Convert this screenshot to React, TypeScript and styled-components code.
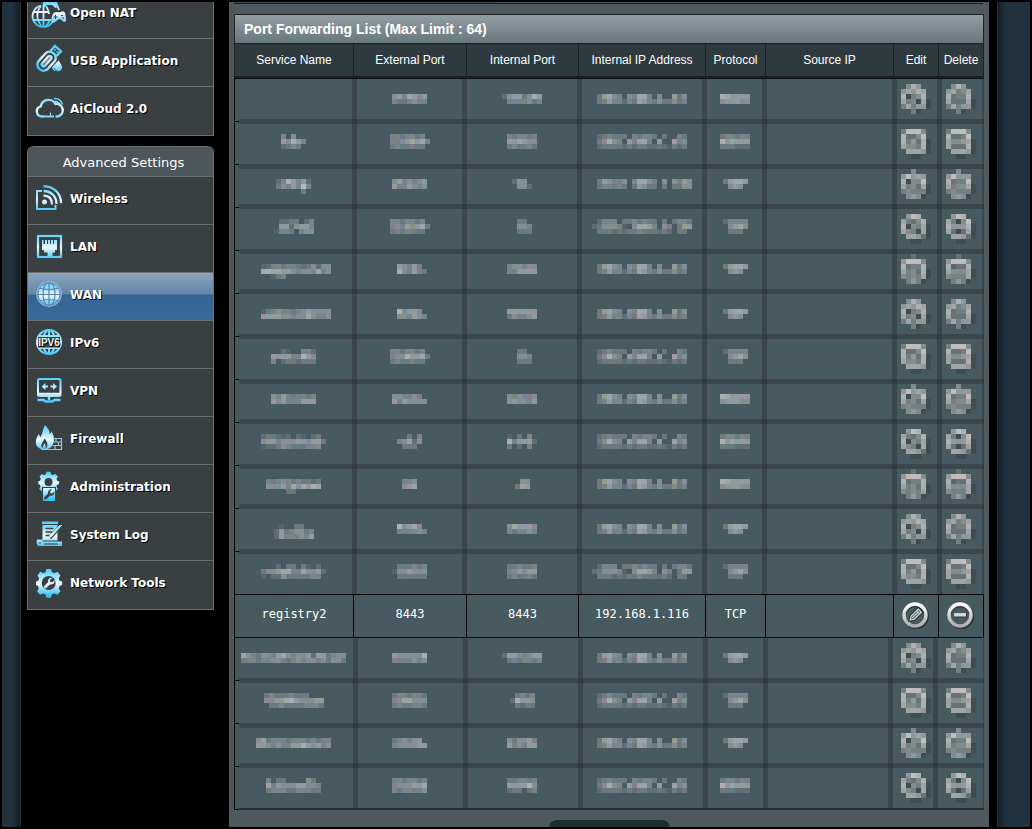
import React from 'react';
import styled, { createGlobalStyle } from 'styled-components';

const GlobalStyle = createGlobalStyle`
  * { box-sizing: border-box; }
  body { margin: 0; background: #000; }
`;

const sans = '"Liberation Sans", Arial, sans-serif';
const menuFont = '"DejaVu Sans", Verdana, sans-serif';
const mono = '"DejaVu Sans Mono", monospace';

const Frame = styled.div`
  display: flex;
  height: 100vh;
  overflow: hidden;
  border: 2px solid #000;
  background: #000;
`;

const Edge = styled.div<{ $side: 'left' | 'right' }>`
  flex: none;
  width: ${(p) => (p.$side === 'left' ? 19 : 33)}px;
  background: linear-gradient(to ${(p) => (p.$side === 'left' ? 'left' : 'right')}, #141f27 0, #21323e 8px);
  border-${(p) => (p.$side === 'left' ? 'right' : 'left')}: 1px solid #2b2b2b;
`;

const Content = styled.div`
  flex: 1;
  min-width: 0;
  display: flex;
  align-items: flex-start;
  gap: 15px;
  padding: 0 8px 0 6px;
`;

const Sidebar = styled.nav`
  flex: none;
  width: 187px;
  margin-top: -11px;
  display: flex;
  flex-direction: column;
  gap: 10px;
`;

const MenuGroup = styled.section`
  border: 1px solid #6b7071;
  border-top-width: 0;
  border-radius: 6px 6px 0 0;
`;

const MenuTitle = styled.h2`
  margin: 0;
  padding: 2px 0 0 6px;
  border: solid #6b7071;
  border-width: 1px 0;
  border-radius: 6px 6px 0 0;
  background: #4d565a;
  color: #fff;
  font: 400 13px/27px ${menuFont};
  text-align: center;
`;

const MenuList = styled.ul`
  list-style: none;
  margin: 0;
  padding: 0;
`;

const MenuLink = styled.a<{ $active?: boolean; $last?: boolean }>`
  display: flex;
  align-items: flex-start;
  gap: 7px;
  padding: 7px 7px 10px;
  border-bottom: 1px solid ${(p) => (p.$last ? '#3a3f42' : '#6b7071')};
  background: ${(p) => (p.$active
    ? 'linear-gradient(#8ba5bd, #6285a8 21px, #386493 22px, #376a9b)'
    : '#3a3f42')};
  color: #fff;
  font: 700 12px/30px ${menuFont};
  text-decoration: none;
  text-shadow: 1px 1px 0 #000;
  white-space: nowrap;
`;

const IconSvg = styled.svg`
  flex: none;
  width: 28px;
  height: 28px;
  overflow: visible;
`;

const HiddenDefs = styled.svg`
  position: absolute;
  width: 0;
  height: 0;
`;

const Main = styled.main`
  flex: 1;
  min-width: 0;
  padding: 0 5px;
  background: #4d595e;
`;

const PriorRow = styled.div`
  display: grid;
  grid-template-columns: 35% 65%;
  height: 2px;
  margin-right: 1px;
  border-bottom: 1px solid #1b2022;
  background: #3a464b;
`;

const PriorValue = styled.div`
  background: #475a5f;
`;

const Table = styled.table`
  width: 100%;
  margin-top: 10px;
  table-layout: fixed;
  border-collapse: separate;
  border-spacing: 0;
  color: #fff;
`;

const Caption = styled.caption`
  height: 29px;
  padding-left: 9px;
  border: 1px solid #1f2527;
  border-bottom: 0;
  background: linear-gradient(#929ea3, #67777c);
  font: 700 14px/28px ${sans};
  text-align: left;
`;

const HeadCell = styled.th`
  height: 35px;
  padding: 0;
  border: solid #1b2022;
  border-width: 1px 0 2px 1px;
  background: #2f3a3e;
  font: 400 12px/32px ${sans};
  white-space: nowrap;
  &:last-child { border-right-width: 1px; }
`;

const ClearCell = styled.td<{ $icon?: boolean }>`
  height: 43px;
  padding: ${(p) => (p.$icon ? '0 2px 3px 0' : '0 0 4px')};
  border: solid #000;
  border-width: 1px 0 0 1px;
  background: #475a5f;
  font: 400 12px/16px ${mono};
  text-align: center;
  vertical-align: middle;
  &:last-child { border-right-width: 1px; }
`;

const bar = (c: string, pos: string, size: string) =>
  `linear-gradient(${c}, ${c}) ${pos} / ${size} no-repeat`;
const shade = 'rgba(32, 36, 42, 0.35)';

interface CellLines {
  $left: number;
  $right: number;
  $top: number;
  $bottom: number;
  $pad: number;
  $first?: boolean;
  $topDark?: boolean;
  $bottomDark?: boolean;
}

const BlurCell = styled.td<CellLines>`
  height: ${(p) => (p.$bottomDark ? 44 : 43)}px;
  padding: ${(p) => p.$pad}px 0 0;
  vertical-align: top;
  line-height: 0;
  text-align: center;
  ${(p) => {
    const w = p.$first ? 'calc(100% - 5px)' : '100%';
    return `background: ${[
      p.$first ? bar('#000', '0 0', '1px 100%') : '',
      p.$first ? bar('#000', '0 0', '5px 1px') : '',
      p.$first && p.$bottomDark ? bar('#000', '0 100%', '5px 1px') : '',
      bar(p.$topDark ? '#0d1011' : shade, '100% 0', `${w} ${p.$top}px`),
      bar(p.$bottomDark ? '#232c2e' : shade, '100% 100%', `${w} ${p.$bottom}px`),
      bar(shade, '0 0', `${p.$left}px 100%`),
      bar(shade, '100% 0', `${p.$right}px 100%`),
      'linear-gradient(#475a5f, #475a5f)',
    ].filter(Boolean).join(', ')};`;
  }}
`;

const IconButton = styled.button`
  display: inline-block;
  padding: 0;
  border: 0;
  background: none;
  line-height: 0;
  vertical-align: top;
  cursor: pointer;
`;

const AddButton = styled.button`
  display: block;
  width: 121px;
  height: 32px;
  margin: 10px auto 0;
  border: 0;
  border-radius: 8px;
  background: linear-gradient(#1e2b30, #253338);
`;

/* ---- mosaic drawings ---- */

const tints = [[0, 0, 0], [6, -6, -2], [-4, 2, 10], [2, 4, -6], [-8, 2, 4], [8, -2, 2], [-2, 0, 8]];

function tone(ch: string, x: number, y: number, tinted: boolean) {
  if (ch === 's') return '#3f4d52';
  const t = Number(ch) / (tinted ? 12 : 10);
  const d = tinted ? tints[(x * 3 + y * 5) % tints.length] : [2, -1, -3];
  const [r, g, b] = [71, 90, 95].map((v, i) => Math.round(v + (216 - v) * t + d[i] * 2 * t));
  return `rgb(${r},${g},${b})`;
}

function Mosaic({ pattern, tinted = true }: { pattern: string; tinted?: boolean }) {
  const lines = pattern.split('/');
  const cols = Math.max(...lines.map((l) => l.length));
  return (
    <svg width={cols * 5} height={lines.length * 5} shapeRendering="crispEdges" aria-hidden="true">
      {lines.flatMap((line, y) =>
        [...line].map((ch, x) =>
          ch === '.' ? null : (
            <rect key={`${x}-${y}`} x={x * 5} y={y * 5} width="5" height="5" fill={tone(ch, x, y, tinted)} />
          )))}
    </svg>
  );
}

const editArt = [
  '.475../56576./7s347./634s6s/36355s/..3s..',
  '38884./72248./73527s/64437s/.6665s/..ss..',
  '..4.../58565./7s448./63426s/34333s/.454s.',
  '.587../63247./7s436s/643s6s/.6652s/..ss..',
  '..2.../58884./72337./63427s/43436s/.353s.',
];
const deleteArt = [
  '.475../56346./72337./62226s/36355s/..3s..',
  '38884./72238./64456s/62227s/.6665s/..ss..',
  '..4.../58555./72338./63446s/34333s/.454s.',
  '.587../63s48./75557s/62s26s/.6652s/..ss..',
  '..2.../58884./71227./64446s/43336s/.353s.',
];
const iconTops = [6, 8, 5, 7, 4];
const textTops = [16, 13, 15, 12, 14];
const bandSplit = [2, 0, 3, 1, 4];

const ip2 = '36754.54774.5..635/346442437643533534';
const ip3 = '234333.43443.3..43/35854.64774.6..745/233332323322321323';
const ipWide2 = '.365445.47754.5.5465/.344343.36533.3.3355';
const ipWide3 = '.2444.3343433.3.3443/2355541.57764.54.366/.333232334333232.33';
const both2 = '876666/566655';
const both3 = '344344/867666/333222';
const tcp2 = '36776/.565.';
const tcp3 = '24444/.5675/.333.';

const hiddenTop: string[][] = [
  ['', '5647656/4334544', '25663586/.4444534', ip2, both2],
  ['4.5../65864/2343.', '4434434./44567674/3433433.', '434434/667655/343343', ip3, both3],
  ['2486462/3546494/.....3.', '5645456/6446545', '255./.552', ipWide2, tcp2],
  ['.2233.24/.6625664/1443.455', '4434434./45465673/3434433.', '.33./.554/.333', ipWide3, tcp3],
  ['.12443443235255/.88776654554745/...134', '.65464./.854643', '455455/446666', ip2, tcp2],
  ['.13454434565555/.66665545575445', '.85665./.554654', '666666/354456', ip2, tcp2],
  ['..21..442/666644865/4.2332333', '4434434./45586673/3433433.', '.33./.554/.333', ip3, tcp3],
  ['546434434/656444666', '554454./6465555', '545445/565546', ip2, both2],
  ['233212.21.23./5664555665663/1223543334450', '..3.4/45725/.333.', '1.3.4/846662/3.2.4.', ip3, both3],
  ['43454343323/55564757687/....33', '445/567', '.55/376/', ip2, both2],
  ['.1..33../26345534/26444546', '.85675./.444454', '576665/434454', ip2, tcp2],
  ['...2.33.31.2./3556774475562/1.22533333440', '.333434/1556555/.333333', '334334/456566/343343', ipWide3, tcp3],
];
const hiddenBottom: string[][] = [
  ['754355467545562663455/344344554345455453553', '6555558/4444545', '26654566/.3434434', ip2, tcp2],
  ['343334333.../556678655566/.33433334443', '3443443/4577555/3433443', '.3434/28665/.3233', ip3, tcp3],
  ['563444344434344/665454466865645', '345456/4555566', '535564/645466', ip2, tcp2],
  ['4.33....53./74655566554/34443344433', '4434434/4555667/4344445', '334434/666685/233.34', ip3, both3],
];

/* left and right share of each vertical band, per column */
const upperEdges = [[0, 1], [4, 4], [1, 1], [4, 3], [2, 3], [2, 1], [4, 1], [4, 2]];
const lowerEdges = [[0, 0], [5, 3], [2, 0], [5, 2], [3, 2], [3, 5], [0, 5], [0, 1]];

interface MaskedRowProps { cells: string[]; index: number; lower?: boolean; last?: boolean }

function MaskedRow({ cells, index, lower, last }: MaskedRowProps) {
  const phase = index % 5;
  const first = index === 0;
  const beforeClear = !lower && index === hiddenTop.length - 1;
  const edges = lower ? lowerEdges : upperEdges;
  const lines = (col: number): CellLines => ({
    $left: edges[col][0],
    $right: edges[col][1],
    $top: first ? 1 : 5 - bandSplit[(index - 1) % 5],
    $bottom: last ? 2 : beforeClear ? 0 : bandSplit[phase],
    $pad: col > 5 ? iconTops[phase] : textTops[phase],
    $first: col === 0,
    $topDark: first,
    $bottomDark: last,
  });
  return (
    <tr>
      {cells.map((c, i) => (
        <BlurCell key={i} {...lines(i)}>{c && <Mosaic pattern={c} />}</BlurCell>
      ))}
      <BlurCell {...lines(5)} />
      <BlurCell {...lines(6)}>
        <IconButton type="button" aria-label="Edit"><Mosaic pattern={editArt[phase]} tinted={false} /></IconButton>
      </BlurCell>
      <BlurCell {...lines(7)}>
        <IconButton type="button" aria-label="Delete"><Mosaic pattern={deleteArt[phase]} tinted={false} /></IconButton>
      </BlurCell>
    </tr>
  );
}

function RoundIcon({ kind }: { kind: 'edit' | 'delete' }) {
  return (
    <svg width="28" height="28" viewBox="0 0 28 28" fill="none" aria-hidden="true">
      <circle cx="15" cy="15.2" r="11" stroke="#1c2426" strokeOpacity=".65" strokeWidth="4" />
      <circle cx="14" cy="14" r="11" fill="#475a5f" stroke="url(#silver)" strokeWidth="3.4" />
      <path d="M5.2 12.5a9.2 9.2 0 0 1 17.6 0" stroke="#2c3639" strokeWidth="1" />
      {kind === 'edit' ? (
        <g transform="rotate(45 14 14)">
          <path d="M12 7.5h4.5v10L14.2 21 12 17.5Z" stroke="#222b2e" strokeWidth="3" />
          <path d="M12 7.5h4.5v10L14.2 21 12 17.5Z" fill="#55666a" stroke="#d5d7d7" strokeWidth="1.2" />
          <path d="M12 9.8h4.5M14.2 10v8" stroke="#d5d7d7" strokeWidth="1" />
        </g>
      ) : (
        <>
          <rect x="8" y="12.5" width="13" height="4" fill="#28373b" />
          <rect x="8" y="12" width="12" height="3.4" rx=".5" fill="#d6d8d8" />
        </>
      )}
    </svg>
  );
}

/* ---- menu icons, on a 28 unit grid ---- */

const G = 'url(#ice)';
const gear = 'M11.3 1h4.8l.7 3.1 2.4 1.2 3.3-1.5 3 3.7-1.8 2.8.9 2.4 2.5.8v3.5l-2.5 1-.9 2.5 1.8 2.7-3 3.6-3.3-1.4-2.4 1.2-.7 3.2h-4.8l-.8-3.2-2.3-1.2-3.3 1.4-2.7-3.6 1.6-2.7-.9-2.5L1 17v-3.5l2.2-.8.9-2.4-1.6-2.8 2.7-3.7 3.3 1.5 2.3-1.2Z';
const wrench = 'M17.9 9.2l-2.6 2.6.5 2 2 .5 2.6-2.5c.7 3.2-2 5.6-4.9 4.8l-4.6 4.3c-1.6 1-3.3-.7-2.3-2.3l4.5-4.5c-.7-2.9 1.8-5.5 4.8-4.9Z';
const globe = (
  <>
    <circle cx="14" cy="14" r="12" />
    <path d="M14 2v24M2 14h24M4 8h20M4 20h20" />
    <ellipse cx="14" cy="14" rx="6" ry="12" />
  </>
);

const icons: Record<string, React.ReactNode> = {
  nat: (
    <>
      <g stroke={G} strokeWidth="1.8" fill="none">
        <path d="M6 7.6A10.8 10.8 0 1 0 18 23M-1.7 14H14M-1.5 22h18M8.5 7.5v21.3" />
        <path d="M6 8c-5 6-5 14 1 20.500M11 8c2 3 3 5 3 8M10 28.500c3-2 4-4 4.400-7M21 4l3 8" />
      </g>
      <path fill={G} d="M10 2h9c3 2 4 7 2 8-2 0-3-3-4-3h-5c-1 0-2 3-4 2-1-2 0-6 2-7Z" />
      <path fill={G} d="M18.500 15c4-2 5 0 7-1 3-2 5 0 5 4 1 3 1 6-1 6s-3-3-5-3-4 4-7 4c-2-1-1-7 1-10Z" />
      <path d="M18.500 19h4M20.500 17v4M26 17.500h2M27 20h2" stroke="#3a3f42" strokeWidth="1" />
    </>
  ),
  usb: (
    <>
      <g transform="rotate(42 14 14)" fill="none" stroke={G}>
        <rect x="7" y="6" width="12" height="21" rx="5.500" strokeWidth="2.400" />
        <rect x="11" y="10" width="4" height="13" rx="2" strokeWidth="2" fill={G} fillOpacity=".5" />
        <path d="M9 6V-.5h8V6" strokeWidth="2.400" />
        <path d="M11 2.500h1.500M14 2.500h1.500" strokeWidth="2" />
      </g>
      <path d="M23.500 13.500c2.500 4 4 6 4 8.300a5.500 5 0 0 1-10.800 0c0-2.300 4.300-4.300 6.800-8.300Z" fill={G} stroke="#3a3f42" strokeWidth="1" />
      <path d="M19 22a4 3 0 0 0 4 3" fill="none" stroke="#4a7088" strokeWidth="1" />
    </>
  ),
  cloud: (
    <>
      <path d="M9 22.500H6.500a5.200 5.200 0 0 1-.8-10.200A8 8 0 0 1 20.500 10a5.800 5.800 0 0 1 2 12.500H20.500" fill="none" stroke={G} strokeWidth="2.400" />
      <path d="M9 21.500h10v2H9zM15 18.500h1v3h-1z" fill={G} />
      <path d="M19 4.500c4-.5 7.500 2 8.500 6M20 7.500c2.500 0 4.500 1.500 5 4" fill="none" stroke={G} strokeWidth="1.500" />
    </>
  ),
  wireless: (
    <g fill="none" stroke={G}>
      <path d="M7 7H2v18h18.500v-4" strokeWidth="1.900" />
      <circle cx="9.500" cy="18" r="2.500" fill={G} stroke="none" />
      <path d="M8.500 11.500c5.500 0 8.500 3 8.500 9M8.500 7c8 .2 13 5.500 13 13M8.500 2.200c11 .4 17.500 7.500 17.500 17" strokeWidth="2.300" />
    </g>
  ),
  lan: (
    <>
      <rect x="3" y="4" width="23" height="21" fill="none" stroke={G} strokeWidth="2.200" />
      <path d="M7 8h1.500v4h1.500V8h2v4h1V8h2v4h1V8h2v4h1V8h3v10h-2v2.500h-2.500V24h-5v-3.500H9V18H7Z" fill={G} />
    </>
  ),
  wan: (
    <g fill="none" stroke="#5b83ad" strokeWidth="1.200">
      <circle cx="14" cy="14" r="11.500" fill={G} stroke="none" />
      <path d="M14 2v24M2 14.500h24M4 8q10 3 20 0M4 21q10-3 20 0" />
      <ellipse cx="14" cy="14" rx="6" ry="12" />
      <circle cx="14" cy="14" r="12.300" stroke="#8fb3d6" />
      <circle cx="14" cy="14" r="11" stroke="#6289b0" strokeWidth="1" />
    </g>
  ),
  ipv6: (
    <>
      <g fill="none" stroke={G} strokeWidth="2">{globe}</g>
      <rect x="3" y="9" width="22" height="10.500" fill="#3a3f42" />
      <text x="14" y="18" textAnchor="middle" fontFamily="Liberation Sans, sans-serif" fontWeight="700" fontSize="10" fill="#e9f6fb">IPV6</text>
    </>
  ),
  vpn: (
    <>
      <rect x="3" y="3" width="22.500" height="17" rx="1.500" fill="none" stroke={G} strokeWidth="2" />
      <path d="M3 18h23M14 20v4M2.500 24h6l2 1.500h7l2-1.500h6" fill="none" stroke={G} strokeWidth="2.400" />
      <path d="M6.500 10.500l4-3.500v2.500H13v2h-2.500V14Zm15.500 0L18 7v2.500h-2.500v2H18V14Z" fill={G} />
    </>
  ),
  firewall: (
    <>
      <path d="M10 1c3 3 5 6 4.500 9 1.500-.5 1.500-2 1.500-3 3 4 4 9 2 13-1 3-4 5.500-8.500 5.500C3 25.500 0 21 1 16c.5-3 2-4 2.500-6 1 1 1.500 2 1.500 3.500C8 10 7.500 5 10 1Z" fill={G} />
      <path d="M9.500 14.500c2.500 3 3.500 5 2.500 8.500-.7 2-4.500 2-5.500-.5-.8-3 2-5 3-8Z" fill="#3a3f42" />
      <path d="M9.500 19c1 2 1.500 3.500.8 5.500H8.200c-.8-2 .5-3.500 1.300-5.500Z" fill={G} />
      <path d="M18 14.500h8.500v11H6M18 18h8M18 21.500h8M21 14.500V18M23.500 18v3.500M20 21.500v4" fill="none" stroke="#9fc6d8" strokeWidth="1.200" />
    </>
  ),
  admin: (
    <>
      <path d={gear} transform="translate(2.500 -1) scale(.8 .76)" fill={G} />
      <circle cx="13.500" cy="10" r="4" fill="#3a3f42" />
      <rect x="7" y="15" width="14" height="15" fill="#3a3f42" />
      <rect x="8" y="16" width="12" height="13" rx="1" fill={G} />
      <path d={wrench} transform="translate(2 9.500) scale(.85)" fill="#3a3f42" />
    </>
  ),
  log: (
    <>
      <path d="M7 1.500h16V4H7zM7.500 5h15v15.500h-15z" fill={G} />
      <path d="M10.500 8.500h8M10.500 12h7M10.500 15.500h5" stroke="#3a3f42" strokeWidth="1.400" />
      <path d="M26.500 5 14.500 18" stroke="#3a3f42" strokeWidth="4" />
      <path d="M27 5 15.500 17.500l-2 1 .5-2L25 5" fill={G} stroke={G} strokeWidth="1" />
      <path d="M2 19.500h5l1 2h19V26H4c-2 0-3-3-2-6.500Z" fill={G} />
      <path d="M5 22v2M9 24h14" stroke="#3a3f42" strokeWidth="1" />
    </>
  ),
  tools: (
    <>
      <path d={gear} fill={G} />
      <circle cx="13.700" cy="15" r="7" fill="#3a3f42" />
      <path d={wrench} transform="translate(1.200 1.500) scale(.9)" fill={G} />
    </>
  ),
};

const general = [['nat', 'Open NAT'], ['usb', 'USB Application'], ['cloud', 'AiCloud 2.0']];
const advanced = [
  ['wireless', 'Wireless'], ['lan', 'LAN'], ['wan', 'WAN'], ['ipv6', 'IPv6'], ['vpn', 'VPN'],
  ['firewall', 'Firewall'], ['admin', 'Administration'], ['log', 'System Log'], ['tools', 'Network Tools'],
];

function Menu({ items, active }: { items: string[][]; active?: string }) {
  return (
    <MenuList>
      {items.map(([icon, label], i) => (
        <li key={icon}>
          <MenuLink href={`#${icon}`} $active={icon === active} $last={i === items.length - 1}>
            <IconSvg viewBox="0 0 28 28" aria-hidden="true">{icons[icon]}</IconSvg>
            {label}
          </MenuLink>
        </li>
      ))}
    </MenuList>
  );
}

const columns: [string, number | undefined][] = [
  ['Service Name', 119], ['External Port', 113], ['Internal Port', 112], ['Internal IP Address', 127],
  ['Protocol', 60], ['Source IP', undefined], ['Edit', 45], ['Delete', 46],
];

export default function App() {
  return (
    <Frame>
      <GlobalStyle />
      <HiddenDefs aria-hidden="true">
        <defs>
          <linearGradient id="ice" gradientUnits="userSpaceOnUse" x1="0" y1="2" x2="0" y2="27">
            <stop offset="0" stopColor="#4fd0fb" />
            <stop offset=".55" stopColor="#eef8fd" />
            <stop offset="1" stopColor="#35c3f7" />
          </linearGradient>
          <linearGradient id="silver" x1="0" y1="0" x2="0" y2="1">
            <stop offset="0" stopColor="#ffffff" />
            <stop offset="1" stopColor="#acacac" />
          </linearGradient>
        </defs>
      </HiddenDefs>
      <Edge $side="left" />
      <Content>
        <Sidebar>
          <MenuGroup><Menu items={general} /></MenuGroup>
          <MenuGroup>
            <MenuTitle>Advanced Settings</MenuTitle>
            <Menu items={advanced} active="wan" />
          </MenuGroup>
        </Sidebar>
        <Main>
          <PriorRow><span /><PriorValue /></PriorRow>
          <Table>
            <Caption>Port Forwarding List (Max Limit : 64)</Caption>
            <colgroup>
              {columns.map(([name, width]) => <col key={name} width={width} />)}
            </colgroup>
            <thead>
              <tr>{columns.map(([name]) => <HeadCell key={name} scope="col">{name}</HeadCell>)}</tr>
            </thead>
            <tbody>
              {hiddenTop.map((cells, i) => <MaskedRow key={i} cells={cells} index={i} />)}
              <tr>
                <ClearCell>registry2</ClearCell>
                <ClearCell>8443</ClearCell>
                <ClearCell>8443</ClearCell>
                <ClearCell>192.168.1.116</ClearCell>
                <ClearCell>TCP</ClearCell>
                <ClearCell />
                <ClearCell $icon>
                  <IconButton type="button" aria-label="Edit registry2"><RoundIcon kind="edit" /></IconButton>
                </ClearCell>
                <ClearCell $icon>
                  <IconButton type="button" aria-label="Delete registry2"><RoundIcon kind="delete" /></IconButton>
                </ClearCell>
              </tr>
              {hiddenBottom.map((cells, i) => (
                <MaskedRow key={i} cells={cells} index={i} lower last={i === hiddenBottom.length - 1} />
              ))}
            </tbody>
          </Table>
          <AddButton type="button" aria-label="Add profile" />
        </Main>
      </Content>
      <Edge $side="right" />
    </Frame>
  );
}
